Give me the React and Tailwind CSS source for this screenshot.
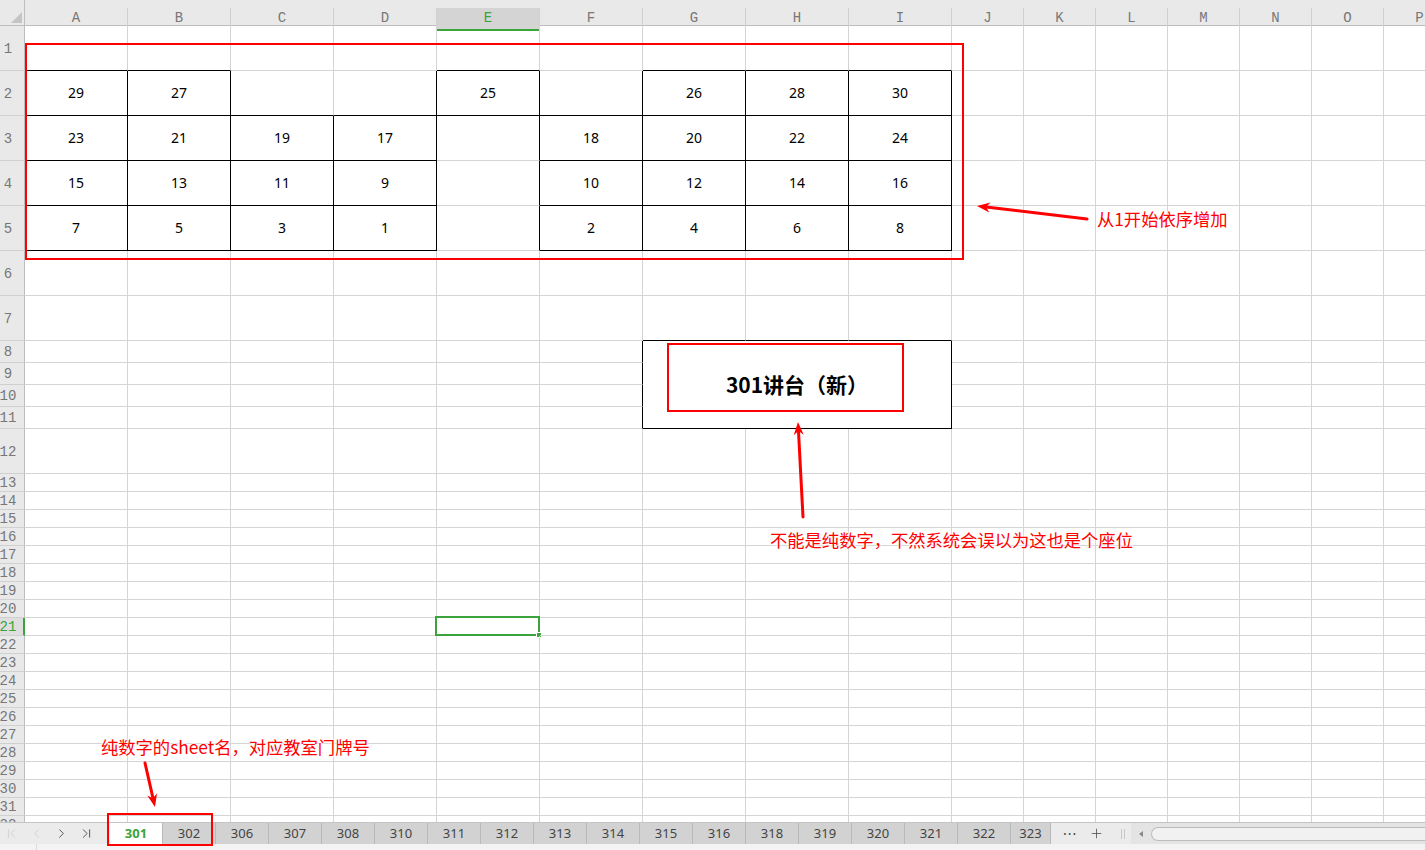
import React from 'react';
import { ChevronFirst, ChevronLast, ChevronLeft, ChevronRight, Plus } from 'lucide-react';

const COLS = ['A', 'B', 'C', 'D', 'E', 'F', 'G', 'H', 'I', 'J', 'K', 'L', 'M', 'N', 'O', 'P'];
const ROWS = Array.from({ length: 32 }, (_, i) => i + 1);

// seat numbers per row / column
const SEATS = {
    2: { A: '29', B: '27', E: '25', G: '26', H: '28', I: '30' },
    3: { A: '23', B: '21', C: '19', D: '17', F: '18', G: '20', H: '22', I: '24' },
    4: { A: '15', B: '13', C: '11', D: '9', F: '10', G: '12', H: '14', I: '16' },
    5: { A: '7', B: '5', C: '3', D: '1', F: '2', G: '4', H: '6', I: '8' },
};

const TABS = ['301', '302', '306', '307', '308', '310', '311', '312', '313', '314', '315', '316', '318', '319', '320', '321', '322', '323'];

const inMerge = (r, c) => r >= 8 && r <= 11 && c >= 6 && c <= 8;

const isBoxed = (r, c) => {
    if (inMerge(r, c)) return true;
    return Boolean(SEATS[r] && SEATS[r][COLS[c]] !== undefined);
};

const FONT = { fontFamily: '"Noto Sans", "Noto Sans CJK SC", sans-serif' };
const MONO = { fontFamily: '"Liberation Mono", monospace' };
const CJK = { fontFamily: '"Noto Sans CJK SC", sans-serif' };

const Arrow = ({ x1, y1, x2, y2 }) => {
    const len = Math.hypot(x2 - x1, y2 - y1);
    const ux = (x2 - x1) / len;
    const uy = (y2 - y1) / len;
    const nx = -uy;
    const ny = ux;
    const L = 13;
    const W = 5;
    const bx = x2 - ux * L;
    const by = y2 - uy * L;
    const kx = x2 - ux * L * 0.7;
    const ky = y2 - uy * L * 0.7;
    return (
        <g>
            <line x1={x1} y1={y1} x2={kx} y2={ky} stroke="#ff0000" strokeWidth="3" strokeLinecap="round" />
            <polygon
                points={`${x2},${y2} ${bx + nx * W},${by + ny * W} ${kx},${ky} ${bx - nx * W},${by - ny * W}`}
                fill="#ff0000"
            />
        </g>
    );
};

const Cell = ({ r, c }) => {
    const right = isBoxed(r, c) || isBoxed(r, c + 1);
    const bottom = isBoxed(r, c) || isBoxed(r + 1, c);
    const value = SEATS[r] ? SEATS[r][COLS[c]] : undefined;
    const selected = r === 21 && c === 4;
    return (
        <div
            className={`relative flex items-center justify-center pb-[1px] border-r border-b text-[14px] text-black ${right ? 'border-r-black' : 'border-r-[#d4d4d4]'} ${bottom ? 'border-b-black' : 'border-b-[#d4d4d4]'}`}
            style={FONT}
        >
            {value}
            {selected && (
                <>
                    <div className="absolute left-[-2px] top-[-2px] w-[105px] h-[20px] border-2 border-[#3aa33a]" />
                    <div className="absolute left-[99px] top-[14px] w-[6px] h-[6px] bg-[#3aa33a] border border-white" />
                </>
            )}
        </div>
    );
};

const App = () => {
    return (
        <div className="relative w-[1425px] h-[850px] overflow-hidden bg-white flex flex-col select-none">
            {/* Sheet grid */}
            <div className="h-[822px] overflow-hidden">
                <div className="grid grid-cols-[25px_repeat(9,103px)_repeat(7,72px)] grid-rows-[26px_repeat(7,45px)_repeat(4,22px)_45px_repeat(20,18px)] w-[1456px]">
                    {/* Corner */}
                    <div className="bg-[#e9e9e9] border-r border-b border-[#bdbdbd] relative">
                        <svg className="absolute left-[11px] top-[12px]" width="12" height="11" viewBox="0 0 12 11">
                            <polygon points="11,0 11,11 0,11" fill="#c4c4c4" />
                        </svg>
                    </div>
                    {COLS.map((col, i) => (
                        <div key={col} className="bg-[#e9e9e9] flex flex-col border-b border-[#bdbdbd]">
                            <div
                                className={`mt-[8px] flex-1 flex items-center justify-center border-r border-[#d0d0d0] text-[14px] ${i === 4 ? 'bg-[#d4d4d4] text-[#3aa33a] border-b-2 border-b-[#3aa33a]' : 'text-[#777]'}`}
                                style={MONO}
                            >
                                {col}
                            </div>
                        </div>
                    ))}

                    {ROWS.map(r => (
                        <React.Fragment key={r}>
                            <div
                                className={`flex items-center pt-[1px] border-b border-b-[#d0d0d0] text-[14px] leading-none overflow-visible ${r === 21 ? 'bg-[#dedede] text-[#3aa33a] border-r-2 border-r-[#3aa33a]' : 'bg-[#e9e9e9] text-[#777] border-r border-r-[#bdbdbd]'}`}
                                style={MONO}
                            >
                                <span className="w-[16px] flex justify-center whitespace-nowrap">{r}</span>
                            </div>
                            {COLS.map((col, c) => {
                                if (inMerge(r, c)) {
                                    if (r === 8 && c === 6) {
                                        return (
                                            <div
                                                key={col}
                                                className="col-[8/span_3] row-[9/span_4] relative flex items-center justify-center border-r border-b border-black"
                                            >
                                                <span className="text-[21px] font-bold text-black pt-[1px]" style={CJK}>
                                                    301讲台（新）
                                                </span>
                                                <div className="absolute left-[24px] top-[2px] w-[237px] h-[69px] border-2 border-[#ff0000]" />
                                            </div>
                                        );
                                    }
                                    return null;
                                }
                                return <Cell key={col} r={r} c={c} />;
                            })}
                        </React.Fragment>
                    ))}
                </div>
            </div>

            {/* Sheet tabs */}
            <div className="h-[22px] flex border-t border-[#c4c4c4] bg-[#ebebeb] text-[13px]" style={FONT}>
                <div className="w-[110px] flex items-center text-[#555]">
                    <ChevronFirst className="ml-[4px] text-[#c8c8c8]" size={15} strokeWidth={1.2} />
                    <ChevronLeft className="ml-[10px] text-[#c8c8c8]" size={15} strokeWidth={1.2} />
                    <ChevronRight className="ml-[10px] text-[#444]" size={15} strokeWidth={1.4} />
                    <ChevronLast className="ml-[10px] text-[#444]" size={15} strokeWidth={1.4} />
                </div>
                {TABS.map((t, i) => (
                    <div
                        key={t}
                        className={`${i === 17 ? 'w-[40px]' : 'w-[53px]'} shrink-0 flex items-center justify-center border-r border-[#b9b9b9] ${i === 0 ? 'bg-white text-[#3aa33a] font-bold' : 'bg-[#d2d2d2] text-[#444]'}`}
                    >
                        {t}
                    </div>
                ))}
                <div className="flex items-center text-[#444] flex-1">
                    <span className="ml-[12px] tracking-[1px] text-[14px] leading-none">···</span>
                    <Plus className="ml-[12px]" size={15} strokeWidth={1.2} />
                    <span className="ml-[17px] w-[4px] h-[10px] border-x border-[#c8c8c8]" />
                    <div className="ml-[6px] h-[21px] flex items-center bg-[#e4e4e4] flex-1">
                        <span className="ml-[8px] w-0 h-0 border-y-[3px] border-y-transparent border-r-[4px] border-r-[#888]" />
                        <div className="ml-[8px] h-[14px] flex-1 rounded-l-full border border-r-0 border-[#bdbdbd] bg-[#f1f1f1]" />
                    </div>
                </div>
            </div>
            <div className="h-[6px] bg-[#f3f3f3] flex">
                <div className="w-[37px] border-r border-[#dddddd]" />
            </div>

            {/* Annotations */}
            <div className="absolute left-[25px] top-[43px] w-[939px] h-[217px] border-2 border-[#ff0000] pointer-events-none" />
            <div className="absolute left-[107px] top-[813px] w-[106px] h-[33px] border-2 border-[#ff0000] pointer-events-none" />

            <svg className="absolute left-0 top-0 pointer-events-none" width="1425" height="850">
                <Arrow x1={1087} y1={219} x2={977} y2={206} />
                <Arrow x1={803} y1={517} x2={798} y2={422} />
                <Arrow x1={145} y1={763} x2={155} y2={807} />
            </svg>

            <div
                className="absolute left-[1097px] top-[208px] text-[17.3px] leading-[22px] text-[#ff0000] whitespace-nowrap [text-shadow:0_0_2px_#fff,0_0_3px_#fff,0_0_4px_#fff]"
                style={CJK}
            >
                从1开始依序增加
            </div>
            <div
                className="absolute left-[770px] top-[529px] text-[17.3px] leading-[22px] text-[#ff0000] whitespace-nowrap [text-shadow:0_0_2px_#fff,0_0_3px_#fff,0_0_4px_#fff]"
                style={CJK}
            >
                不能是纯数字，不然系统会误以为这也是个座位
            </div>
            <div
                className="absolute left-[101px] top-[736px] text-[17.3px] leading-[22px] text-[#ff0000] whitespace-nowrap [text-shadow:0_0_2px_#fff,0_0_3px_#fff,0_0_4px_#fff]"
                style={CJK}
            >
                纯数字的sheet名，对应教室门牌号
            </div>
        </div>
    );
};

export default App;
